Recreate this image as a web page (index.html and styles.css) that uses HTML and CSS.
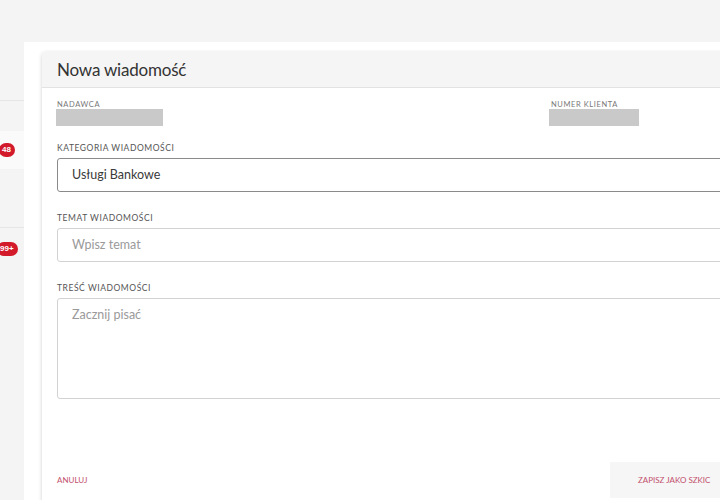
FILE: index.html
```html
<!DOCTYPE html>
<html>
	<head>
		<meta charset="UTF-8">
		<title>Nowa wiadomość</title>
		<link rel="stylesheet" href="styles.css">
	</head>
	<body>
		<div class="page">
			<div class="side">
				<div class="side-top"></div>
				<div class="side-row">
					<div class="side-hl"><span class="badge">48</span></div>
				</div>
				<div class="side-row2">
					<span class="badge badge-cut">99+</span>
				</div>
			</div>
			<div class="panel">
				<div class="card">
					<div class="card-head">Nowa wiadomość</div>
					<div class="card-body">
						<div class="pair">
							<div class="col-a">
								<div class="mini">NADAWCA</div>
								<div class="mask mask-a"></div>
							</div>
							<div class="col-b">
								<div class="mini">NUMER KLIENTA</div>
								<div class="mask mask-b"></div>
							</div>
						</div>

						<div class="label">KATEGORIA WIADOMOŚCI</div>
						<div class="field field-dark">Usługi Bankowe</div>

						<div class="label">TEMAT WIADOMOŚCI</div>
						<div class="field field-light hint">Wpisz temat</div>

						<div class="label">TREŚĆ WIADOMOŚCI</div>
						<div class="field field-light area hint">Zacznij pisać</div>

						<div class="foot">
							<span class="link">ANULUJ</span>
							<span class="draft">ZAPISZ JAKO SZKIC</span>
						</div>
					</div>
				</div>
			</div>
		</div>
	</body>
</html>
```

FILE: styles.css
```css
*{
	margin: 0;
	padding: 0;
	box-sizing: border-box;
}
body{
	background-color: #f4f4f4;
	font-family: Lato, "Open Sans", sans-serif;
	overflow: hidden;
	width: 720px;
	height: 500px;
}
.page{
	display: flex;
	height: 500px;
}
.side{
	width: 24px;
	flex-shrink: 0;
}
.side-top{
	height: 101px;
	border-bottom: 1px solid #e6e6e6;
}
.side-row{
	height: 127px;
	border-bottom: 1px solid #e6e6e6;
	padding-top: 30px;
}
.side-hl{
	height: 38px;
	background-color: #fafafa;
	display: flex;
	align-items: center;
}
.side-row2{
	padding-top: 7px;
}
.badge{
	display: inline-block;
	height: 14px;
	line-height: 14px;
	padding: 0 4px 0 3px;
	margin-left: -1px;
	border-radius: 7px;
	background-color: #d31a2a;
	color: #fff;
	font-size: 8px;
	font-weight: bold;
	font-family: "Liberation Sans", sans-serif;
}
.badge-cut{
	margin-left: -3px;
}
.panel{
	flex: 1;
	margin-top: 42px;
	background-color: #fff;
	padding: 10px 0 0 18px;
	overflow: hidden;
}
.card{
	width: 760px;
	height: 460px;
	background-color: #fff;
	border-radius: 4px;
	box-shadow: 0 1px 4px rgba(0,0,0,0.18);
}
.card-head{
	height: 36px;
	line-height: 35px;
	background-color: #f5f5f5;
	border-bottom: 1px solid #e3e3e3;
	border-radius: 4px 4px 0 0;
	padding-left: 15px;
	font-size: 17px;
	letter-spacing: -0.2px;
	color: #333;
}
.card-body{
	padding: 12px 0 0 15px;
}
.pair{
	display: flex;
}
.col-a{
	width: 494px;
}
.mini{
	font-size: 7.5px;
	letter-spacing: 0.6px;
	color: #777;
	line-height: 10px;
}
.mask{
	height: 17px;
	background-color: #c9c9c9;
	margin-top: -1px;
}
.mask-a{
	width: 107px;
	margin-left: -1px;
}
.mask-b{
	width: 90px;
	margin-left: -2px;
}
.label{
	font-size: 8.5px;
	letter-spacing: 0.55px;
	color: #555;
	line-height: 12px;
	margin-top: 16px;
	margin-bottom: 4px;
}
.field{
	height: 34px;
	line-height: 32px;
	border-radius: 3px;
	padding-left: 14px;
	font-size: 12.5px;
	color: #3a3a3a;
}
.field-dark{
	border: 1px solid #8a8a8a;
}
.field-light{
	border: 1px solid #d2d2d2;
}
.field-dark + .label{
	margin-top: 20px;
}
.field-light + .label{
	margin-top: 20px;
}
.hint{
	color: #9a9a9a;
}
.area{
	height: 101px;
	line-height: 16px;
	padding-top: 8px;
}
.foot{
	display: flex;
	justify-content: space-between;
	align-items: center;
	margin-top: 63px;
	width: 663px;
}
.link{
	font-size: 8px;
	color: #c2506c;
}
.draft{
	display: inline-block;
	width: 110px;
	height: 36px;
	line-height: 36px;
	background-color: #f6f6f6;
	padding-left: 28px;
	font-size: 8px;
	color: #c2506c;
}
```
